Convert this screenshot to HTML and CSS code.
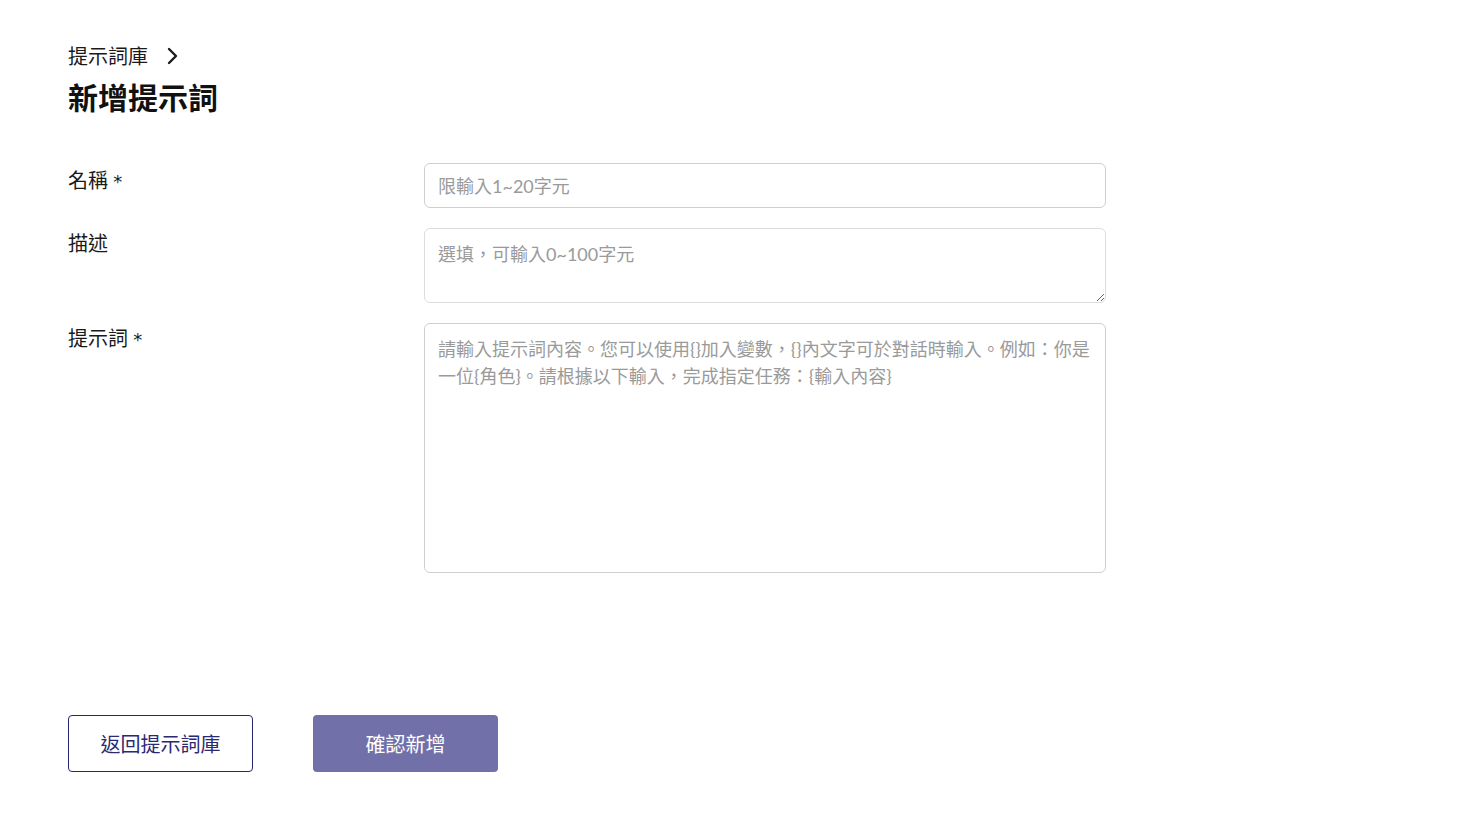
FILE: index.html
```html
<!DOCTYPE html>
<html lang="zh-Hant">
<head>
<meta charset="utf-8">
<title>新增提示詞</title>
<link rel="stylesheet" href="styles.css">
</head>
<body>
<main class="page">
  <nav class="crumb">
    <span class="crumb-text">提示詞庫</span>
    <svg class="crumb-chev" width="14" height="18" viewBox="0 0 14 18" aria-hidden="true">
      <path d="M4 2 L11 9 L4 16" fill="none" stroke="#1a1a1a" stroke-width="2.4" stroke-linecap="round" stroke-linejoin="round"/>
    </svg>
  </nav>
  <h1 class="title">新增提示詞</h1>

  <form class="form">
    <label class="label label-first" for="name">名稱 <span class="req">*</span></label>
    <input class="field field-input" id="name" type="text" placeholder="限輸入1~20字元">

    <label class="label" for="desc">描述</label>
    <textarea class="field field-desc" id="desc" placeholder="選填，可輸入0~100字元"></textarea>

    <label class="label" for="prompt">提示詞 <span class="req">*</span></label>
    <textarea class="field field-prompt" id="prompt" placeholder="請輸入提示詞內容。您可以使用{}加入變數，{}內文字可於對話時輸入。例如：你是&#10;一位{角色}。請根據以下輸入，完成指定任務：{輸入內容}"></textarea>
  </form>

  <div class="actions">
    <button class="btn btn-outline" type="button">返回提示詞庫</button>
    <button class="btn btn-primary" type="button">確認新增</button>
  </div>
</main>
</body>
</html>
```
FILE: styles.css
```css
* { box-sizing: border-box; }
html, body { margin: 0; padding: 0; background: #fff; }
body {
  font-family: Lato, "Noto Sans CJK TC", sans-serif;
  color: #1a1a1a;
}
.page {
  padding: 41px 0 0 68px;
}
.crumb {
  display: flex;
  align-items: center;
  gap: 17px;
  height: 30px;
}
.crumb-text {
  font-size: 20px;
  line-height: 30px;
  color: #1a1a1a;
}
.crumb-chev { display: block; }
.title {
  margin: 4px 0 0;
  font-size: 30px;
  line-height: 45px;
  font-weight: 700;
  color: #111;
}
.form {
  margin-top: 43px;
  display: grid;
  grid-template-columns: 356px 682px;
  row-gap: 20px;
  align-items: start;
}
.label {
  font-size: 20px;
  line-height: 30px;
  color: #1a1a1a;
  padding-top: 0;
}
.req {
  font-family: "DejaVu Sans", sans-serif;
  font-size: 18px;
}
.label-first { padding-top: 2px; }
.field {
  display: block;
  width: 682px;
  margin: 0;
  border: 1px solid #cfcfcf;
  border-radius: 6px;
  font-family: Lato, "Noto Sans CJK TC", sans-serif;
  font-size: 18px;
  color: #333;
  background: #fff;
  outline: none;
}
.field::placeholder { color: #9a9a9a; }
.field-input {
  height: 45px;
  padding: 0 13px;
}
.field-desc {
  height: 75px;
  padding: 12px 13px;
  line-height: 27px;
  border-color: #dcdcdc;
  resize: vertical;
}
.field-prompt {
  height: 250px;
  padding: 12px 13px;
  line-height: 27px;
  resize: none;
}
.actions {
  margin-top: 142px;
  display: flex;
  gap: 60px;
}
.btn {
  width: 185px;
  height: 57px;
  border-radius: 4px;
  font-family: Lato, "Noto Sans CJK TC", sans-serif;
  font-size: 20px;
  cursor: pointer;
}
.btn-outline {
  background: #fff;
  border: 1px solid #27266f;
  color: #2a2972;
}
.btn-primary {
  background: #7270a8;
  border: none;
  color: #fff;
}
```
